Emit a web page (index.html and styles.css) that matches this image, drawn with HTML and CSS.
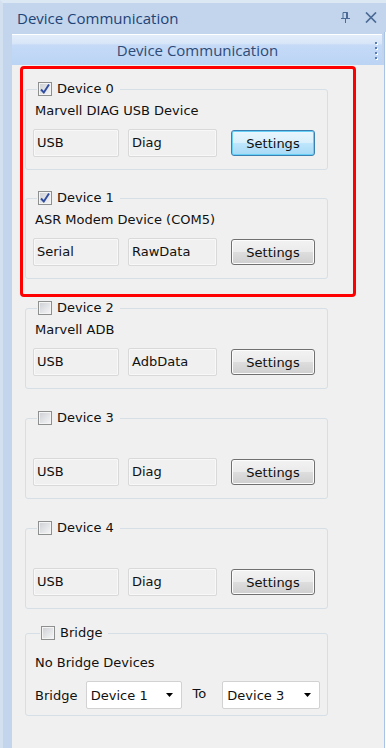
FILE: index.html
```html
<!DOCTYPE html>
<html>
<head>
    <meta charset="UTF-8">
    <title>Device Communication</title>
    <link rel="stylesheet" href="styles.css">
</head>
<body>
<div class="window">
    <div class="titlebar">
        <span class="title">Device Communication</span>
        <span class="tools">
            <svg class="pin" width="9" height="11" viewBox="0 0 9 11">
                <path d="M2 0.5H6.5V6.5M2 0.5V6.5M0 6.5H9M4.5 6.5V11" fill="none" stroke="#4b6a95" stroke-width="1"/>
                <rect x="5" y="0.5" width="2" height="6" fill="#4b6a95"/>
            </svg>
            <svg class="close" width="12" height="11" viewBox="0 0 12 11">
                <path d="M1 0.5L11 10.5M11 0.5L1 10.5" stroke="#4b6a95" stroke-width="1.7"/>
            </svg>
        </span>
    </div>
    <div class="pane">
        <div class="pane-head">
            <span class="pane-title">Device Communication</span>
            <span class="grip"><i></i><i></i><i></i><i></i></span>
        </div>
        <div class="pane-body">
            <!-- devices 0 and 1 are the ones marked in red -->
            <div class="marked">
                <fieldset class="group">
                    <legend><span class="check on"><svg width="12" height="12" viewBox="0 0 12 12"><path d="M2 6.5L4.8 9.5L10 1.5" fill="none" stroke="#2f4c9f" stroke-width="1.9"/></svg></span>Device 0</legend>
                    <div class="desc">Marvell DIAG USB Device</div>
                    <div class="row">
                        <div class="field">USB</div>
                        <div class="field wide">Diag</div>
                        <button class="btn focus">Settings</button>
                    </div>
                </fieldset>
                <fieldset class="group">
                    <legend><span class="check on"><svg width="12" height="12" viewBox="0 0 12 12"><path d="M2 6.5L4.8 9.5L10 1.5" fill="none" stroke="#2f4c9f" stroke-width="1.9"/></svg></span>Device 1</legend>
                    <div class="desc">ASR Modem Device (COM5)</div>
                    <div class="row">
                        <div class="field">Serial</div>
                        <div class="field wide">RawData</div>
                        <button class="btn">Settings</button>
                    </div>
                </fieldset>
            </div>
            <fieldset class="group">
                <legend><span class="check"></span>Device 2</legend>
                <div class="desc">Marvell ADB</div>
                <div class="row">
                    <div class="field">USB</div>
                    <div class="field wide">AdbData</div>
                    <button class="btn">Settings</button>
                </div>
            </fieldset>
            <fieldset class="group">
                <legend><span class="check"></span>Device 3</legend>
                <div class="desc"></div>
                <div class="row">
                    <div class="field">USB</div>
                    <div class="field wide">Diag</div>
                    <button class="btn">Settings</button>
                </div>
            </fieldset>
            <fieldset class="group">
                <legend><span class="check"></span>Device 4</legend>
                <div class="desc"></div>
                <div class="row">
                    <div class="field">USB</div>
                    <div class="field wide">Diag</div>
                    <button class="btn">Settings</button>
                </div>
            </fieldset>
            <fieldset class="group bridge">
                <legend><span class="check"></span>Bridge</legend>
                <div class="desc">No Bridge Devices</div>
                <div class="row">
                    <span class="label">Bridge</span>
                    <div class="combo">Device 1<svg width="7" height="4" viewBox="0 0 7 4"><path d="M0 0H7L3.5 4Z" fill="#000"/></svg></div>
                    <span class="label to">To</span>
                    <div class="combo">Device 3<svg width="7" height="4" viewBox="0 0 7 4"><path d="M0 0H7L3.5 4Z" fill="#000"/></svg></div>
                </div>
            </fieldset>
        </div>
    </div>
</div>
</body>
</html>
```

FILE: styles.css
```css
body {
    margin: 0;
    background: #fff;
    font-family: "DejaVu Sans", sans-serif;
    font-size: 13px;
    color: #111;
}

.window {
    width: 386px;
    height: 748px;
    box-sizing: border-box;
    border-top: 3px solid #dde8f5;
    border-left: 3px solid #d3e0f0;
    background: #c2d5ec;
    display: flex;
    flex-direction: column;
}

.titlebar {
    height: 29px;
    flex: none;
    display: flex;
    align-items: center;
    justify-content: space-between;
    padding: 0 9px 0 14px;
}

.title {
    font-family: "Open Sans", sans-serif;
    font-size: 15px;
    color: #1f4377;
}

.tools {
    display: flex;
    align-items: center;
    gap: 15px;
}

.pane {
    flex: 1;
    display: flex;
    flex-direction: column;
    margin-left: 9px;
    width: 372px;
    border-right: 1px solid #a9c3e6;
    box-shadow: 1px 0 0 #fff;
}

.pane-head {
    flex: none;
    height: 30px;
    margin: 2px 2px 0 0;
    border-top: 1px solid #fff;
    background: linear-gradient(#e3edfa, #d8e6f8 28%, #c4daf7 34%, #bcd4f4);
    display: flex;
    align-items: center;
}

.pane-title {
    flex: 1;
    text-align: center;
    padding-left: 8px;
    font-family: "Open Sans", sans-serif;
    font-size: 15px;
    color: #2e4b76;
}

.grip {
    display: flex;
    flex-direction: column;
    gap: 3px;
    margin-right: 5px;
}

.grip i {
    width: 2px;
    height: 2px;
    background: #5b7fb3;
    box-shadow: 1px 1px 0 #fff;
}

.pane-body {
    flex: 1;
    background: #f0f0f0;
    padding: 1px 0 0 8px;
}

.marked {
    width: 336px;
    box-sizing: border-box;
    border: 3px solid #fe0000;
    border-radius: 4px;
    padding: 12px 0 15px 2px;
}

.group {
    width: 303px;
    box-sizing: border-box;
    margin: 21px 0 0 5px;
    padding: 0 7px 12px 7px;
    border: 1px solid #d5dfe5;
    border-radius: 3px;
    min-width: 0;
}

.marked .group {
    margin: 0;
}

.marked .group + .group {
    margin-top: 20px;
}

.marked + .group {
    margin-top: 3px;
}

legend {
    margin-left: 4px;
    padding: 0 6px 0 1px;
    line-height: 16px;
    height: 16px;
}

.check {
    display: inline-block;
    width: 14px;
    height: 14px;
    box-sizing: border-box;
    vertical-align: top;
    margin: 1px 5px 0 0;
    border: 1px solid #8e8f8f;
    background: linear-gradient(135deg, #cbced3, #f7f7f7);
    box-shadow: inset 0 0 0 1px #f4f4f4;
}

.check svg {
    display: block;
}

.desc {
    margin-top: 6px;
    height: 16px;
    line-height: 16px;
    padding-left: 2px;
}

.row {
    display: flex;
    align-items: center;
    margin-top: 10px;
    height: 28px;
}

.field {
    width: 86px;
    height: 28px;
    box-sizing: border-box;
    padding-left: 3px;
    line-height: 26px;
    border: 1px solid #d9d9d9;
    border-radius: 2px;
    box-shadow: inset 0 0 0 1px #f8f8f8;
}

.field.wide {
    width: 89px;
    margin-left: 9px;
}

.btn {
    margin-left: 14px;
    width: 84px;
    height: 26px;
    padding: 0;
    font: inherit;
    color: #111;
    border: 1px solid #707070;
    border-radius: 3px;
    background: linear-gradient(#f2f2f2, #ebebeb 48%, #dddddd 52%, #cfcfcf);
    box-shadow: inset 0 0 0 1px #fcfcfc;
}

.btn.focus {
    border-color: #3c7fb1;
    background: linear-gradient(#eaf6fd, #d9f0fc 48%, #bee6fd 52%, #a7d9f5);
    box-shadow: inset 0 0 0 1px #66d0f6;
}

.bridge {
    margin-top: 16px;
    padding-bottom: 6px;
}

.bridge legend {
    margin-left: 7px;
}

.bridge .desc {
    margin-top: 14px;
}

.label {
    width: 51px;
    padding-left: 2px;
}

.label.to {
    width: 30px;
    padding-left: 0;
    margin-left: 10px;
    margin-top: -4px;
}

.combo {
    width: 97px;
    height: 28px;
    box-sizing: border-box;
    display: flex;
    align-items: center;
    justify-content: space-between;
    padding: 0 8px 0 4px;
    background: #fff;
    border: 1px solid #d2d2d2;
    border-radius: 2px;
}

.combo + .label + .combo {
    width: 98px;
}
```
